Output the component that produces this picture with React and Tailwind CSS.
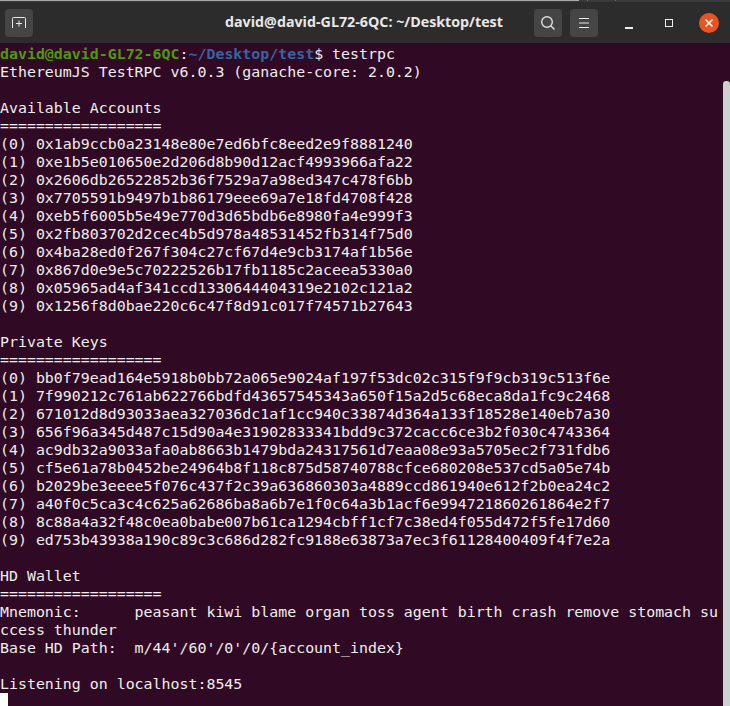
const lines = [
  "EthereumJS TestRPC v6.0.3 (ganache-core: 2.0.2)",
  "",
  "Available Accounts",
  "==================",
  "(0) 0x1ab9ccb0a23148e80e7ed6bfc8eed2e9f8881240",
  "(1) 0xe1b5e010650e2d206d8b90d12acf4993966afa22",
  "(2) 0x2606db26522852b36f7529a7a98ed347c478f6bb",
  "(3) 0x7705591b9497b1b86179eee69a7e18fd4708f428",
  "(4) 0xeb5f6005b5e49e770d3d65bdb6e8980fa4e999f3",
  "(5) 0x2fb803702d2cec4b5d978a48531452fb314f75d0",
  "(6) 0x4ba28ed0f267f304c27cf67d4e9cb3174af1b56e",
  "(7) 0x867d0e9e5c70222526b17fb1185c2aceea5330a0",
  "(8) 0x05965ad4af341ccd1330644404319e2102c121a2",
  "(9) 0x1256f8d0bae220c6c47f8d91c017f74571b27643",
  "",
  "Private Keys",
  "==================",
  "(0) bb0f79ead164e5918b0bb72a065e9024af197f53dc02c315f9f9cb319c513f6e",
  "(1) 7f990212c761ab622766bdfd43657545343a650f15a2d5c68eca8da1fc9c2468",
  "(2) 671012d8d93033aea327036dc1af1cc940c33874d364a133f18528e140eb7a30",
  "(3) 656f96a345d487c15d90a4e31902833341bdd9c372cacc6ce3b2f030c4743364",
  "(4) ac9db32a9033afa0ab8663b1479bda24317561d7eaa08e93a5705ec2f731fdb6",
  "(5) cf5e61a78b0452be24964b8f118c875d58740788cfce680208e537cd5a05e74b",
  "(6) b2029be3eeee5f076c437f2c39a636860303a4889ccd861940e612f2b0ea24c2",
  "(7) a40f0c5ca3c4c625a62686ba8a6b7e1f0c64a3b1acf6e994721860261864e2f7",
  "(8) 8c88a4a32f48c0ea0babe007b61ca1294cbff1cf7c38ed4f055d472f5fe17d60",
  "(9) ed753b43938a190c89c3c686d282fc9188e63873a7ec3f61128400409f4f7e2a",
  "",
  "HD Wallet",
  "==================",
  "Mnemonic:      peasant kiwi blame organ toss agent birth crash remove stomach su",
  "ccess thunder",
  "Base HD Path:  m/44'/60'/0'/0/{account_index}",
  "",
  "Listening on localhost:8545",
];

export default function App() {
  return (
    <div className="w-[730px] h-[706px] overflow-hidden flex flex-col bg-[#300a24]">
      <div className="h-[2px] shrink-0 flex bg-[#3a3a3a]">
        <div className="w-[579px] h-[1px] bg-[#a8a8a8]" />
        <div className="ml-[8px] w-[1px] h-[1px] bg-[#6a6a6a]" />
        <div className="ml-[27px] w-[1px] h-[1px] bg-[#6a6a6a]" />
      </div>
      <header className="relative h-[41px] shrink-0 flex items-center justify-between bg-[#2c2c2c] pl-[5px] pr-[11px] font-['Open_Sans','Noto_Sans',sans-serif]">
        <button className="w-[28px] h-[28px] rounded-[4px] bg-[#454545] flex items-center justify-center">
          <svg width="16" height="16" viewBox="0 0 16 16" fill="none" stroke="#e8e8e8" strokeWidth="1">
            <path d="M1.5 13V3.5a1 1 0 0 1 1-1h11a1 1 0 0 1 1 1V13" />
            <path d="M8 5.5v6M5 8.5h6" />
          </svg>
        </button>
        <h1 className="absolute left-[225px] top-[10px] text-[14.25px] leading-[20px] font-bold text-[#e8e8e8] whitespace-nowrap">david@david-GL72-6QC: ~/Desktop/test</h1>
        <div className="flex items-center">
          <button className="w-[28px] h-[28px] rounded-[4px] bg-[#454545] flex items-center justify-center">
            <svg width="16" height="16" viewBox="0 0 16 16" fill="none" stroke="#e0e0e0" strokeWidth="1.4">
              <circle cx="7" cy="7" r="5.3" />
              <path d="M11 11l3.5 3.5" />
            </svg>
          </button>
          <button className="ml-[8px] w-[28px] h-[28px] rounded-[4px] bg-[#454545] flex items-center justify-center">
            <svg width="12" height="12" viewBox="0 0 12 12" fill="none" stroke="#e8e8e8" strokeWidth="1">
              <path d="M1 1.5h10M1 6h10M1 10.5h10" />
            </svg>
          </button>
          <div className="ml-[27px] w-[8px] h-[8px] mt-[5px] border-b-2 border-b-[#f0f0f0]" />
          <div className="ml-[32px] w-[8px] h-[8px] border border-[#f0f0f0] outline outline-[#f0f0f0] -outline-offset-1" />
          <button className="ml-[26px] w-[20px] h-[20px] rounded-full bg-[#e95420] flex items-center justify-center">
            <svg width="10" height="10" viewBox="0 0 10 10" fill="none" stroke="#ffffff" strokeWidth="1.6">
              <path d="M1.5 1.5l7 7M8.5 1.5l-7 7" />
            </svg>
          </button>
        </div>
      </header>
      <main className="relative flex-1 pt-[2px] font-['DejaVu_Sans_Mono','Liberation_Mono',monospace] text-[14.92px] leading-[18px] text-[#eeeeec] whitespace-pre">
        <div><span className="text-[#4e9a06] font-bold">david@david-GL72-6QC</span>:<span className="text-[#3465a4] font-bold">~/Desktop/test</span>$ testrpc</div>
        {lines.map((line, i) => (
          <div key={i} className="h-[18px]">{line}</div>
        ))}
        <div className="w-[8px] h-[14px] bg-white" />
        <div className="absolute right-0 top-[38px] bottom-0 w-[7px] bg-[#d0d0d0] rounded-t-[3px]" />
      </main>
    </div>
  );
}
